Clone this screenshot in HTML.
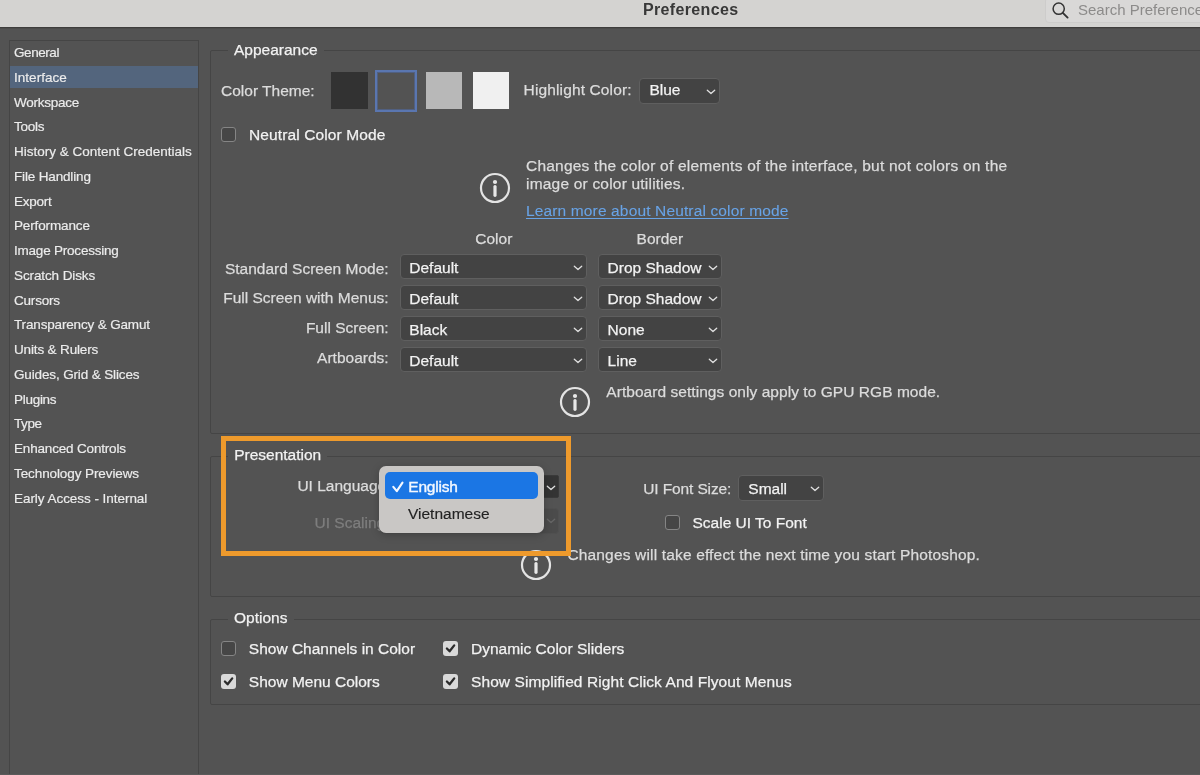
<!DOCTYPE html>
<html><head><meta charset="utf-8"><style>
html,body{margin:0;padding:0;width:1200px;height:775px;overflow:hidden;background:#535353;font-family:"Liberation Sans", sans-serif}
.t{position:absolute;white-space:nowrap;line-height:1;font-family:"Liberation Sans", sans-serif;transform:translateZ(0);-webkit-text-stroke:0.25px currentColor}
</style></head><body>
<div style="position:absolute;left:0px;top:0px;width:1200px;height:27px;background:#d4d3d1"></div>
<div style="position:absolute;left:0px;top:27px;width:1200px;height:1px;background:#3e3d3c"></div>
<div style="position:absolute;left:0px;top:28px;width:1200px;height:1px;background:#4d4c4b"></div>
<div class="t" style="left:643.00px;top:2.25px;font-size:16px;color:#383838;font-weight:bold;letter-spacing:0.35px;-webkit-text-stroke:0">Preferences</div>
<div style="position:absolute;left:1045px;top:-3px;width:170px;height:26px;background:#d9d8d7;border:1px solid #cdcccb;border-radius:4px;box-sizing:border-box"></div>
<svg style="position:absolute;left:1050px;top:0px" width="22" height="22" viewBox="0 0 22 22"><circle cx="8.7" cy="8.7" r="5.6" fill="none" stroke="#333333" stroke-width="1.5"/><line x1="12.8" y1="12.8" x2="17.6" y2="17.6" stroke="#333333" stroke-width="1.9" stroke-linecap="round"/></svg>
<div class="t" style="left:1078.00px;top:2.00px;font-size:15px;color:#8c8b8a;font-weight:normal;-webkit-text-stroke:0">Search Preferences</div>
<div style="position:absolute;left:9px;top:40px;width:190px;height:800px;border:1px solid #454545;box-sizing:border-box"></div>
<div style="position:absolute;left:10px;top:66px;width:188px;height:22px;background:#53657d"></div>
<div class="t" style="left:14.00px;top:46.07px;font-size:13.5px;color:#ececec;font-weight:normal;-webkit-text-stroke:0.18px currentColor;letter-spacing:-0.433px">General</div>
<div class="t" style="left:14.00px;top:70.82px;font-size:13.5px;color:#ececec;font-weight:normal;-webkit-text-stroke:0.18px currentColor;letter-spacing:0.037px">Interface</div>
<div class="t" style="left:14.00px;top:95.57px;font-size:13.5px;color:#ececec;font-weight:normal;-webkit-text-stroke:0.18px currentColor;letter-spacing:-0.237px">Workspace</div>
<div class="t" style="left:14.00px;top:120.32px;font-size:13.5px;color:#ececec;font-weight:normal;-webkit-text-stroke:0.18px currentColor;letter-spacing:-0.250px">Tools</div>
<div class="t" style="left:14.00px;top:145.07px;font-size:13.5px;color:#ececec;font-weight:normal;-webkit-text-stroke:0.18px currentColor;letter-spacing:-0.007px">History &amp; Content Credentials</div>
<div class="t" style="left:14.00px;top:169.82px;font-size:13.5px;color:#ececec;font-weight:normal;-webkit-text-stroke:0.18px currentColor;letter-spacing:-0.158px">File Handling</div>
<div class="t" style="left:14.00px;top:194.57px;font-size:13.5px;color:#ececec;font-weight:normal;-webkit-text-stroke:0.18px currentColor;letter-spacing:-0.240px">Export</div>
<div class="t" style="left:14.00px;top:219.32px;font-size:13.5px;color:#ececec;font-weight:normal;-webkit-text-stroke:0.18px currentColor;letter-spacing:-0.130px">Performance</div>
<div class="t" style="left:14.00px;top:244.07px;font-size:13.5px;color:#ececec;font-weight:normal;-webkit-text-stroke:0.18px currentColor;letter-spacing:-0.213px">Image Processing</div>
<div class="t" style="left:14.00px;top:268.82px;font-size:13.5px;color:#ececec;font-weight:normal;-webkit-text-stroke:0.18px currentColor;letter-spacing:-0.108px">Scratch Disks</div>
<div class="t" style="left:14.00px;top:293.57px;font-size:13.5px;color:#ececec;font-weight:normal;-webkit-text-stroke:0.18px currentColor;letter-spacing:-0.200px">Cursors</div>
<div class="t" style="left:14.00px;top:318.32px;font-size:13.5px;color:#ececec;font-weight:normal;-webkit-text-stroke:0.18px currentColor;letter-spacing:-0.158px">Transparency &amp; Gamut</div>
<div class="t" style="left:14.00px;top:343.07px;font-size:13.5px;color:#ececec;font-weight:normal;-webkit-text-stroke:0.18px currentColor;letter-spacing:-0.154px">Units &amp; Rulers</div>
<div class="t" style="left:14.00px;top:367.82px;font-size:13.5px;color:#ececec;font-weight:normal;-webkit-text-stroke:0.18px currentColor;letter-spacing:-0.140px">Guides, Grid &amp; Slices</div>
<div class="t" style="left:14.00px;top:392.57px;font-size:13.5px;color:#ececec;font-weight:normal;-webkit-text-stroke:0.18px currentColor;letter-spacing:-0.283px">Plugins</div>
<div class="t" style="left:14.00px;top:417.32px;font-size:13.5px;color:#ececec;font-weight:normal;-webkit-text-stroke:0.18px currentColor;letter-spacing:-0.400px">Type</div>
<div class="t" style="left:14.00px;top:442.07px;font-size:13.5px;color:#ececec;font-weight:normal;-webkit-text-stroke:0.18px currentColor;letter-spacing:-0.175px">Enhanced Controls</div>
<div class="t" style="left:14.00px;top:466.82px;font-size:13.5px;color:#ececec;font-weight:normal;-webkit-text-stroke:0.18px currentColor;letter-spacing:-0.094px">Technology Previews</div>
<div class="t" style="left:14.00px;top:491.57px;font-size:13.5px;color:#ececec;font-weight:normal;-webkit-text-stroke:0.18px currentColor;letter-spacing:-0.045px">Early Access - Internal</div>
<div style="position:absolute;left:210px;top:50px;width:1200px;height:384px;border:1px solid #454545;border-radius:2px;box-sizing:border-box"></div>
<div style="position:absolute;left:228px;top:48px;width:96px;height:5px;background:#535353"></div>
<div class="t" style="left:234.00px;top:41.88px;font-size:15.5px;color:#f2f2f2;font-weight:normal;">Appearance</div>
<div class="t" style="left:221.00px;top:83.18px;font-size:15.5px;color:#dcdcdc;font-weight:normal;">Color Theme:</div>
<div style="position:absolute;left:331px;top:72px;width:37px;height:37px;background:#323232"></div>
<div style="position:absolute;left:375px;top:70px;width:42px;height:42px;border:2px solid #5a76b0;box-shadow:inset 0 0 0 1px rgba(80,105,160,0.6);box-sizing:border-box"></div>
<div style="position:absolute;left:426px;top:72px;width:36px;height:37px;background:#b8b8b8"></div>
<div style="position:absolute;left:473px;top:72px;width:36px;height:37px;background:#f0f0f0"></div>
<div class="t" style="left:523.60px;top:82.48px;font-size:15.5px;color:#dcdcdc;font-weight:normal;letter-spacing:0.13px">Highlight Color:</div>
<div style="position:absolute;left:639px;top:78px;width:81px;height:26px;background:#434343;border:1px solid #5f5f5f;border-radius:4px;box-sizing:border-box"></div>
<div class="t" style="left:649.40px;top:82.48px;font-size:15.5px;color:#f2f2f2;font-weight:normal;">Blue</div>
<svg style="position:absolute;left:706px;top:88px" width="10" height="8" viewBox="0 0 10 8"><polyline points="1.3,2.3 5,5.6 8.7,2.3" fill="none" stroke="#e0e0e0" stroke-width="1.3" stroke-linecap="round" stroke-linejoin="round"/></svg>
<div style="position:absolute;left:221px;top:127px;width:15px;height:15px;background:#464646;border:1px solid #858585;border-radius:3px;box-sizing:border-box"></div>
<div class="t" style="left:249.00px;top:127.08px;font-size:15.5px;color:#f2f2f2;font-weight:normal;letter-spacing:0.12px">Neutral Color Mode</div>
<svg style="position:absolute;left:479px;top:171.5px" width="32" height="32" viewBox="0 0 32 32"><circle cx="16" cy="16" r="14" fill="none" stroke="#e4e4e4" stroke-width="2.2"/><circle cx="16" cy="10" r="2.1" fill="#e8e8e8"/><line x1="16" y1="14.6" x2="16" y2="23.3" stroke="#e8e8e8" stroke-width="3.2" stroke-linecap="round"/></svg>
<div class="t" style="left:526.00px;top:158.08px;font-size:15.5px;color:#dcdcdc;font-weight:normal;letter-spacing:0.22px">Changes the color of elements of the interface, but not colors on the</div>
<div class="t" style="left:526.00px;top:176.38px;font-size:15.5px;color:#dcdcdc;font-weight:normal;letter-spacing:0.2px">image or color utilities.</div>
<div class="t" style="left:526.00px;top:202.68px;font-size:15.5px;color:#68a3e6;font-weight:normal;text-decoration:underline;text-underline-offset:2px;text-decoration-thickness:1px;letter-spacing:0.14px;-webkit-text-stroke:0.1px currentColor">Learn more about Neutral color mode</div>
<div class="t" style="left:475.30px;top:231.48px;font-size:15.5px;color:#dcdcdc;font-weight:normal;">Color</div>
<div class="t" style="left:636.60px;top:231.48px;font-size:15.5px;color:#dcdcdc;font-weight:normal;">Border</div>
<div class="t" style="right:811.40px;top:261.38px;font-size:15.5px;color:#dcdcdc;font-weight:normal;">Standard Screen Mode:</div>
<div class="t" style="right:811.40px;top:290.08px;font-size:15.5px;color:#dcdcdc;font-weight:normal;">Full Screen with Menus:</div>
<div class="t" style="right:811.40px;top:319.88px;font-size:15.5px;color:#dcdcdc;font-weight:normal;">Full Screen:</div>
<div class="t" style="right:811.40px;top:349.88px;font-size:15.5px;color:#dcdcdc;font-weight:normal;">Artboards:</div>
<div style="position:absolute;left:400px;top:254px;width:187px;height:25px;background:#434343;border:1px solid #5f5f5f;border-radius:4px;box-sizing:border-box"></div>
<div class="t" style="left:409.30px;top:259.68px;font-size:15.5px;color:#f2f2f2;font-weight:normal;">Default</div>
<svg style="position:absolute;left:573px;top:263.5px" width="10" height="8" viewBox="0 0 10 8"><polyline points="1.3,2.3 5,5.6 8.7,2.3" fill="none" stroke="#e0e0e0" stroke-width="1.3" stroke-linecap="round" stroke-linejoin="round"/></svg>
<div style="position:absolute;left:598px;top:254px;width:124px;height:25px;background:#434343;border:1px solid #5f5f5f;border-radius:4px;box-sizing:border-box"></div>
<div class="t" style="left:607.60px;top:259.68px;font-size:15.5px;color:#f2f2f2;font-weight:normal;">Drop Shadow</div>
<svg style="position:absolute;left:708px;top:263.5px" width="10" height="8" viewBox="0 0 10 8"><polyline points="1.3,2.3 5,5.6 8.7,2.3" fill="none" stroke="#e0e0e0" stroke-width="1.3" stroke-linecap="round" stroke-linejoin="round"/></svg>
<div style="position:absolute;left:400px;top:285px;width:187px;height:25px;background:#434343;border:1px solid #5f5f5f;border-radius:4px;box-sizing:border-box"></div>
<div class="t" style="left:409.30px;top:290.68px;font-size:15.5px;color:#f2f2f2;font-weight:normal;">Default</div>
<svg style="position:absolute;left:573px;top:294.5px" width="10" height="8" viewBox="0 0 10 8"><polyline points="1.3,2.3 5,5.6 8.7,2.3" fill="none" stroke="#e0e0e0" stroke-width="1.3" stroke-linecap="round" stroke-linejoin="round"/></svg>
<div style="position:absolute;left:598px;top:285px;width:124px;height:25px;background:#434343;border:1px solid #5f5f5f;border-radius:4px;box-sizing:border-box"></div>
<div class="t" style="left:607.60px;top:290.68px;font-size:15.5px;color:#f2f2f2;font-weight:normal;">Drop Shadow</div>
<svg style="position:absolute;left:708px;top:294.5px" width="10" height="8" viewBox="0 0 10 8"><polyline points="1.3,2.3 5,5.6 8.7,2.3" fill="none" stroke="#e0e0e0" stroke-width="1.3" stroke-linecap="round" stroke-linejoin="round"/></svg>
<div style="position:absolute;left:400px;top:316px;width:187px;height:25px;background:#434343;border:1px solid #5f5f5f;border-radius:4px;box-sizing:border-box"></div>
<div class="t" style="left:409.30px;top:321.68px;font-size:15.5px;color:#f2f2f2;font-weight:normal;">Black</div>
<svg style="position:absolute;left:573px;top:325.5px" width="10" height="8" viewBox="0 0 10 8"><polyline points="1.3,2.3 5,5.6 8.7,2.3" fill="none" stroke="#e0e0e0" stroke-width="1.3" stroke-linecap="round" stroke-linejoin="round"/></svg>
<div style="position:absolute;left:598px;top:316px;width:124px;height:25px;background:#434343;border:1px solid #5f5f5f;border-radius:4px;box-sizing:border-box"></div>
<div class="t" style="left:607.60px;top:321.68px;font-size:15.5px;color:#f2f2f2;font-weight:normal;">None</div>
<svg style="position:absolute;left:708px;top:325.5px" width="10" height="8" viewBox="0 0 10 8"><polyline points="1.3,2.3 5,5.6 8.7,2.3" fill="none" stroke="#e0e0e0" stroke-width="1.3" stroke-linecap="round" stroke-linejoin="round"/></svg>
<div style="position:absolute;left:400px;top:347px;width:187px;height:25px;background:#434343;border:1px solid #5f5f5f;border-radius:4px;box-sizing:border-box"></div>
<div class="t" style="left:409.30px;top:352.68px;font-size:15.5px;color:#f2f2f2;font-weight:normal;">Default</div>
<svg style="position:absolute;left:573px;top:356.5px" width="10" height="8" viewBox="0 0 10 8"><polyline points="1.3,2.3 5,5.6 8.7,2.3" fill="none" stroke="#e0e0e0" stroke-width="1.3" stroke-linecap="round" stroke-linejoin="round"/></svg>
<div style="position:absolute;left:598px;top:347px;width:124px;height:25px;background:#434343;border:1px solid #5f5f5f;border-radius:4px;box-sizing:border-box"></div>
<div class="t" style="left:607.60px;top:352.68px;font-size:15.5px;color:#f2f2f2;font-weight:normal;">Line</div>
<svg style="position:absolute;left:708px;top:356.5px" width="10" height="8" viewBox="0 0 10 8"><polyline points="1.3,2.3 5,5.6 8.7,2.3" fill="none" stroke="#e0e0e0" stroke-width="1.3" stroke-linecap="round" stroke-linejoin="round"/></svg>
<svg style="position:absolute;left:559px;top:386px" width="32" height="32" viewBox="0 0 32 32"><circle cx="16" cy="16" r="14" fill="none" stroke="#e4e4e4" stroke-width="2.2"/><circle cx="16" cy="10" r="2.1" fill="#e8e8e8"/><line x1="16" y1="14.6" x2="16" y2="23.3" stroke="#e8e8e8" stroke-width="3.2" stroke-linecap="round"/></svg>
<div class="t" style="left:606.30px;top:383.88px;font-size:15.5px;color:#dcdcdc;font-weight:normal;letter-spacing:0.05px">Artboard settings only apply to GPU RGB mode.</div>
<div style="position:absolute;left:210px;top:456px;width:1200px;height:141px;border:1px solid #454545;border-radius:2px;box-sizing:border-box"></div>
<div style="position:absolute;left:228px;top:454px;width:99px;height:5px;background:#535353"></div>
<div class="t" style="left:234.20px;top:446.58px;font-size:15.5px;color:#f2f2f2;font-weight:normal;">Presentation</div>
<div class="t" style="left:297.40px;top:478.38px;font-size:15.5px;color:#dcdcdc;font-weight:normal;">UI Language:</div>
<div style="position:absolute;left:380px;top:475px;width:179px;height:23px;background:#343434;border:1px solid #3a3a3a;border-radius:2px;box-sizing:border-box"></div>
<svg style="position:absolute;left:546px;top:484px" width="10" height="8" viewBox="0 0 10 8"><polyline points="1.3,2.3 5,5.6 8.7,2.3" fill="none" stroke="#e0e0e0" stroke-width="1.3" stroke-linecap="round" stroke-linejoin="round"/></svg>
<div class="t" style="left:314.50px;top:514.88px;font-size:15.5px;color:#7e7e7e;font-weight:normal;">UI Scaling:</div>
<div style="position:absolute;left:380px;top:508px;width:179px;height:26px;background:#4b4b4b;border:1px solid #505050;border-radius:4px;box-sizing:border-box"></div>
<svg style="position:absolute;left:546px;top:517px" width="10" height="8" viewBox="0 0 10 8"><polyline points="1.3,2.3 5,5.6 8.7,2.3" fill="none" stroke="#666" stroke-width="1.3" stroke-linecap="round" stroke-linejoin="round"/></svg>
<div class="t" style="left:643.30px;top:480.58px;font-size:15.5px;color:#dcdcdc;font-weight:normal;letter-spacing:-0.13px">UI Font Size:</div>
<div style="position:absolute;left:738px;top:475px;width:86px;height:26px;background:#434343;border:1px solid #5f5f5f;border-radius:4px;box-sizing:border-box"></div>
<div class="t" style="left:748.30px;top:480.58px;font-size:15.5px;color:#f2f2f2;font-weight:normal;">Small</div>
<svg style="position:absolute;left:810px;top:485px" width="10" height="8" viewBox="0 0 10 8"><polyline points="1.3,2.3 5,5.6 8.7,2.3" fill="none" stroke="#e0e0e0" stroke-width="1.3" stroke-linecap="round" stroke-linejoin="round"/></svg>
<div style="position:absolute;left:665px;top:515px;width:15px;height:15px;background:#464646;border:1px solid #858585;border-radius:3px;box-sizing:border-box"></div>
<div class="t" style="left:692.50px;top:515.18px;font-size:15.5px;color:#f2f2f2;font-weight:normal;">Scale UI To Font</div>
<svg style="position:absolute;left:520px;top:549px" width="32" height="32" viewBox="0 0 32 32"><circle cx="16" cy="16" r="14" fill="none" stroke="#e4e4e4" stroke-width="2.2"/><circle cx="16" cy="10" r="2.1" fill="#e8e8e8"/><line x1="16" y1="14.6" x2="16" y2="23.3" stroke="#e8e8e8" stroke-width="3.2" stroke-linecap="round"/></svg>
<div class="t" style="left:567.40px;top:547.38px;font-size:15.5px;color:#dcdcdc;font-weight:normal;letter-spacing:0.165px">Changes will take effect the next time you start Photoshop.</div>
<div style="position:absolute;left:379px;top:466px;width:165px;height:67px;background:#c9c7c5;border-radius:7px;box-shadow:0 2px 8px rgba(0,0,0,0.22)"></div>
<div style="position:absolute;left:385px;top:472px;width:153px;height:27px;background:#1b76e4;border-radius:5px"></div>
<svg style="position:absolute;left:388px;top:478px" width="20" height="18" viewBox="0 0 20 18"><polyline points="5.3,8.9 8.8,13.2 14.5,4.6" fill="none" stroke="#f4f8ff" stroke-width="2.1" stroke-linecap="round" stroke-linejoin="round"/></svg>
<div class="t" style="left:408.30px;top:478.88px;font-size:15.5px;color:#f4f8ff;font-weight:normal;letter-spacing:-0.2px;-webkit-text-stroke:0.4px currentColor">English</div>
<div class="t" style="left:408.00px;top:506.18px;font-size:15.5px;color:#222222;font-weight:normal;-webkit-text-stroke:0.15px currentColor">Vietnamese</div>
<div style="position:absolute;left:221px;top:436px;width:350px;height:120px;border:5px solid #ee9a2c;box-sizing:border-box"></div>
<div style="position:absolute;left:0px;top:774px;width:1200px;height:1px;background:#5a5a5a"></div>
<div style="position:absolute;left:210px;top:619px;width:1200px;height:86px;border:1px solid #454545;border-radius:2px;box-sizing:border-box"></div>
<div style="position:absolute;left:228px;top:617px;width:66px;height:5px;background:#535353"></div>
<div class="t" style="left:234.00px;top:609.78px;font-size:15.5px;color:#f2f2f2;font-weight:normal;">Options</div>
<div style="position:absolute;left:221px;top:641px;width:15px;height:15px;background:#464646;border:1px solid #858585;border-radius:3px;box-sizing:border-box"></div>
<div class="t" style="left:248.80px;top:640.68px;font-size:15.5px;color:#f2f2f2;font-weight:normal;">Show Channels in Color</div>
<div style="position:absolute;left:443px;top:641px;width:15px;height:15px;background:#d9d9d9;border-radius:3px"></div>
<svg style="position:absolute;left:443px;top:641px" width="15" height="15" viewBox="0 0 15 15"><polyline points="3.9,7.5 6.6,10.3 11.2,4.4" fill="none" stroke="#2b2b2b" stroke-width="2.3" stroke-linecap="round" stroke-linejoin="round"/></svg>
<div class="t" style="left:471.00px;top:640.68px;font-size:15.5px;color:#f2f2f2;font-weight:normal;">Dynamic Color Sliders</div>
<div style="position:absolute;left:221px;top:674px;width:15px;height:15px;background:#d9d9d9;border-radius:3px"></div>
<svg style="position:absolute;left:221px;top:674px" width="15" height="15" viewBox="0 0 15 15"><polyline points="3.9,7.5 6.6,10.3 11.2,4.4" fill="none" stroke="#2b2b2b" stroke-width="2.3" stroke-linecap="round" stroke-linejoin="round"/></svg>
<div class="t" style="left:248.80px;top:673.88px;font-size:15.5px;color:#f2f2f2;font-weight:normal;">Show Menu Colors</div>
<div style="position:absolute;left:443px;top:674px;width:15px;height:15px;background:#d9d9d9;border-radius:3px"></div>
<svg style="position:absolute;left:443px;top:674px" width="15" height="15" viewBox="0 0 15 15"><polyline points="3.9,7.5 6.6,10.3 11.2,4.4" fill="none" stroke="#2b2b2b" stroke-width="2.3" stroke-linecap="round" stroke-linejoin="round"/></svg>
<div class="t" style="left:471.00px;top:673.88px;font-size:15.5px;color:#f2f2f2;font-weight:normal;letter-spacing:0.085px">Show Simplified Right Click And Flyout Menus</div>
</body></html>
